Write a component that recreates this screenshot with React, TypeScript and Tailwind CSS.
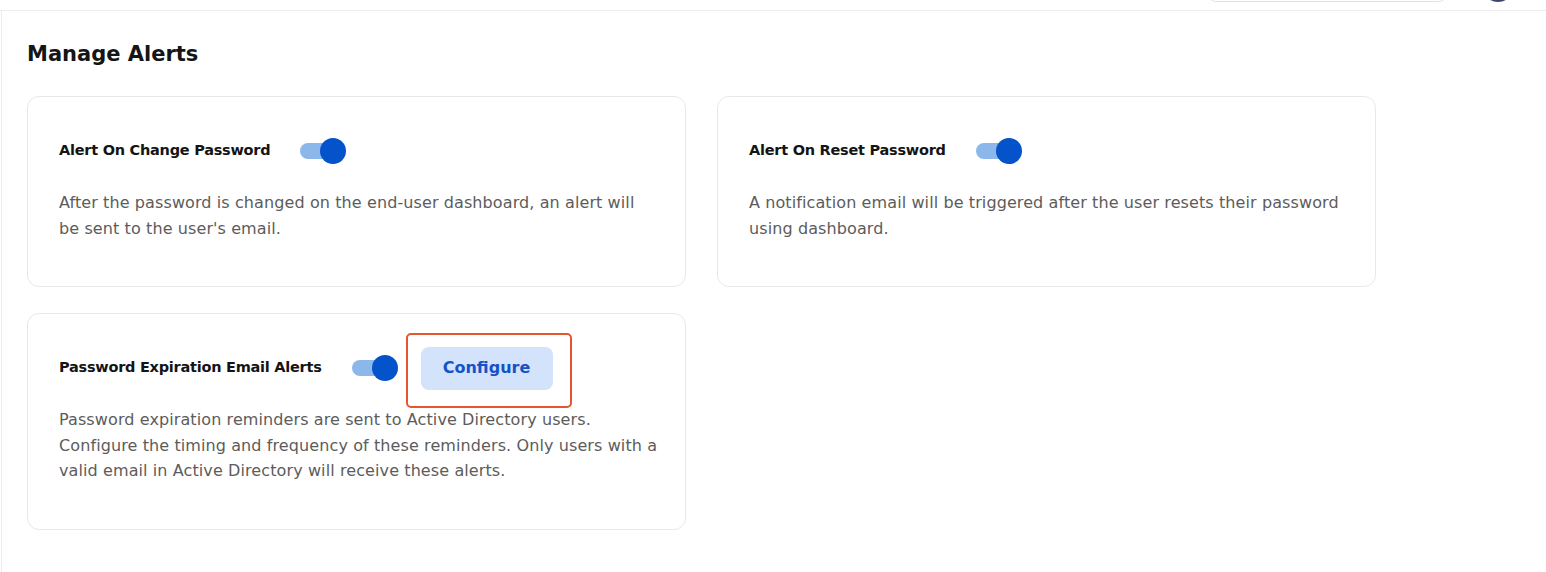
const font = { fontFamily: '"DejaVu Sans", "Open Sans", sans-serif' };

type AlertCard = {
  title: string;
  lines: string[];
  configure?: boolean;
};

const cards: AlertCard[] = [
  {
    title: "Alert On Change Password",
    lines: [
      "After the password is changed on the end-user dashboard, an alert will",
      "be sent to the user's email.",
    ],
  },
  {
    title: "Alert On Reset Password",
    lines: [
      "A notification email will be triggered after the user resets their password",
      "using dashboard.",
    ],
  },
  {
    title: "Password Expiration Email Alerts",
    configure: true,
    lines: [
      "Password expiration reminders are sent to Active Directory users.",
      "Configure the timing and frequency of these reminders. Only users with a",
      "valid email in Active Directory will receive these alerts.",
    ],
  },
];

function Toggle() {
  return (
    <div className="relative flex h-[26px] w-[46px] shrink-0 items-center">
      <div className="h-[16px] w-[36px] rounded-full bg-[#8bb7ea]" />
      <div className="absolute right-0 top-0 h-[26px] w-[26px] rounded-full bg-[#0453cb]" />
    </div>
  );
}

function Card({ title, lines, configure }: AlertCard) {
  return (
    <div className="rounded-xl border border-[#e8e8e8] bg-white pb-[45px] pl-[31px] pr-4 pt-8">
      <div className="flex h-[44px] items-center">
        <span className="text-[14.5px] font-semibold tracking-[-0.25px] text-[#141414]">
          {title}
        </span>
        <div className="ml-[30px]">
          <Toggle />
        </div>
        {configure && (
          <div className="relative ml-[23px]">
            <div className="absolute -bottom-[18px] -left-[15px] -right-[19px] -top-[14px] rounded-[5px] border-2 border-[#e4562e]" />
            <button className="h-[43px] w-[132px] rounded-lg bg-[#d3e3fc] text-[16px] font-bold text-[#1552c6]">
              Configure
            </button>
          </div>
        )}
      </div>
      <p className="mt-[17px] text-[16px] leading-[25.5px] tracking-[0.1px] text-[#5c5c5c]">
        {lines.map((line, i) => (
          <span key={i} className="block whitespace-nowrap">
            {line}
          </span>
        ))}
      </p>
    </div>
  );
}

export default function App() {
  return (
    <div className="min-h-[572px] bg-white" style={font}>
      <header className="flex h-[11px] items-end justify-end overflow-hidden border-b border-[#ececec] pr-[32px]">
        <div className="mb-[8px] h-[40px] w-[239px] rounded-lg border border-[#e3e3e3]" />
        <div className="mb-[8px] ml-[35px] h-[32px] w-[32px] rounded-full bg-[#3d4668]" />
      </header>
      <main className="ml-[1px] min-h-[561px] border-l border-[#ececec] px-[25px] pt-[28px]">
        <h1 className="mb-[27px] text-[21px] font-semibold leading-[30px] text-[#151515]">
          Manage Alerts
        </h1>
        <div className="grid grid-cols-[659px_659px] items-start gap-x-[31px] gap-y-[26px]">
          {cards.map((c) => (
            <Card key={c.title} {...c} />
          ))}
        </div>
      </main>
    </div>
  );
}
